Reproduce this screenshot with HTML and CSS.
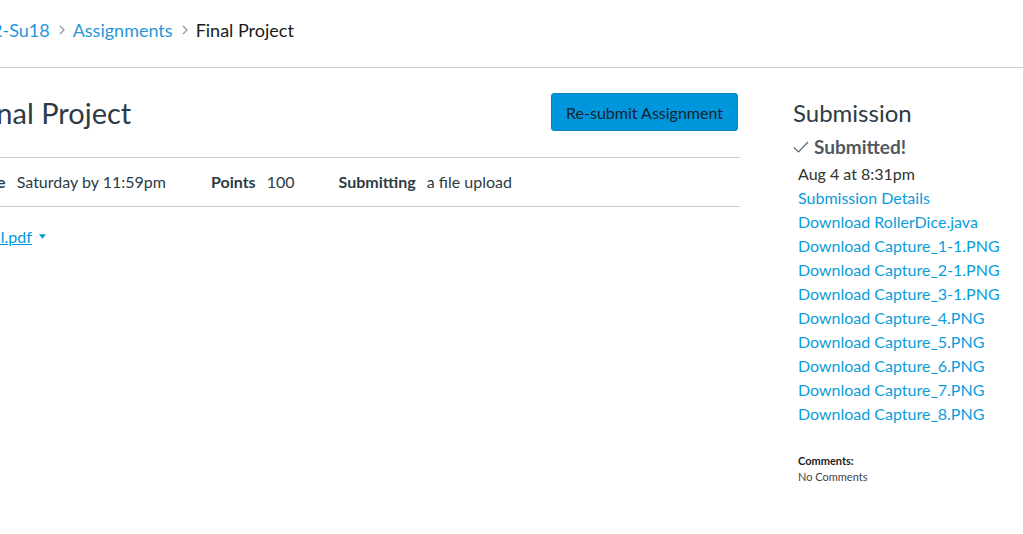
FILE: index.html
```html
<!DOCTYPE html>
<html lang="en">
<head>
<meta charset="utf-8">
<title>Final Project</title>
<link rel="stylesheet" href="styles.css">
</head>
<body>
<header class="topbar">
  <nav class="crumbs">
    <a class="crumb crumb-first" href="#">2-Su18</a>
    <svg class="chev" viewBox="0 0 6 10" width="6" height="10"><path d="M1 1l4 4-4 4" fill="none" stroke="#8b969e" stroke-width="1.2"/></svg>
    <a class="crumb" href="#">Assignments</a>
    <svg class="chev" viewBox="0 0 6 10" width="6" height="10"><path d="M1 1l4 4-4 4" fill="none" stroke="#8b969e" stroke-width="1.2"/></svg>
    <span class="crumb current">Final Project</span>
  </nav>
</header>
<div class="layout">
  <main class="main">
    <div class="title-row">
      <h1 class="title">Final Project</h1>
      <button class="btn">Re-submit Assignment</button>
    </div>
    <ul class="details">
      <li><b>Due</b> Saturday by 11:59pm</li>
      <li><b>Points</b> 100</li>
      <li><b>Submitting</b> a file upload</li>
    </ul>
    <div class="file">
      <a href="#" class="file-link">Final.pdf</a>
      <svg class="caret" viewBox="0 0 8 5" width="7" height="5"><path d="M0 0h8L4 5z" fill="#0096db"/></svg>
    </div>
  </main>
  <aside class="sidebar">
    <h2 class="side-title">Submission</h2>
    <div class="submitted">
      <svg class="check" viewBox="0 0 16 12" width="16" height="12"><path d="M1 6.5l4.5 4.5L15 1" fill="none" stroke="#5a6670" stroke-width="1.2"/></svg>
      <span>Submitted!</span>
    </div>
    <ul class="sub-list">
      <li class="date">Aug 4 at 8:31pm</li>
      <li><a href="#">Submission Details</a></li>
      <li><a href="#">Download RollerDice.java</a></li>
      <li><a href="#">Download Capture_1-1.PNG</a></li>
      <li><a href="#">Download Capture_2-1.PNG</a></li>
      <li><a href="#">Download Capture_3-1.PNG</a></li>
      <li><a href="#">Download Capture_4.PNG</a></li>
      <li><a href="#">Download Capture_5.PNG</a></li>
      <li><a href="#">Download Capture_6.PNG</a></li>
      <li><a href="#">Download Capture_7.PNG</a></li>
      <li><a href="#">Download Capture_8.PNG</a></li>
    </ul>
    <div class="comments">
      <div class="comments-label">Comments:</div>
      <div class="comments-text">No Comments</div>
    </div>
  </aside>
</div>
</body>
</html>
```
FILE: styles.css
```css
html, body {
  margin: 0;
  padding: 0;
  background: #fff;
}
body {
  font-family: Lato, "Open Sans", sans-serif;
  color: #2d3b45;
  overflow: hidden;
}
a { text-decoration: none; }

.topbar {
  height: 68px;
  border-bottom: 1px solid #c7cdd1;
  box-sizing: border-box;
  display: flex;
  align-items: center;
}
.crumbs {
  display: flex;
  align-items: center;
  font-size: 18px;
  margin-top: -7px;
}
.crumb { color: #2a95d6; }
.crumb-first { margin-left: -8px; }
.crumb.current { color: #1a1a1a; }
.chev { margin: 0 8px 0 9px; }

.layout {
  display: flex;
  margin-left: -24px;
}
.main {
  width: 764px;
  flex: none;
}
.title-row {
  display: flex;
  justify-content: space-between;
  align-items: center;
  margin-top: 25px;
  height: 38px;
  padding-right: 2px;
}
.title {
  margin: 0 0 0 -3px;
  font-size: 29px;
  font-weight: 400;
  color: #2d3b45;
}
.btn {
  font-family: inherit;
  font-size: 16px;
  color: #17232e;
  background: #0096db;
  border: 1px solid #0084c2;
  border-radius: 3px;
  height: 38px;
  padding: 0 14px;
}
.details {
  list-style: none;
  margin: 26px 0 0;
  padding: 12px 0;
  border-top: 1px solid #c7cdd1;
  border-bottom: 1px solid #c7cdd1;
  display: flex;
  font-size: 16px;
  line-height: 24px;
}
.details li { margin-right: 44px; }
.details li:first-child { margin-right: 45px; }
.details b { font-weight: 700; margin-right: 7px; }
.file {
  margin-top: 20px;
  display: flex;
  align-items: center;
  font-size: 16px;
  margin-left: -5px;
}
.file-link {
  color: #0096db;
  text-decoration: underline;
}
.caret { margin-left: 7px; }

.sidebar {
  margin-left: 53px;
  width: 240px;
  flex: none;
}
.side-title {
  margin: 27px 0 0;
  font-size: 24px;
  font-weight: 400;
  color: #2d3b45;
  line-height: 36px;
}
.submitted {
  display: flex;
  align-items: center;
  font-size: 19px;
  font-weight: 700;
  color: #4f5a61;
  margin-top: 2px;
  line-height: 28px;
}
.check { margin-right: 5px; }
.sub-list {
  list-style: none;
  margin: 1px 0 0;
  padding: 0 0 0 5px;
  font-size: 16px;
  line-height: 24px;
}
.sub-list .date { color: #333; }
.sub-list a { color: #0a9ddb; }
.comments {
  margin-top: 27px;
  padding-left: 5px;
  font-size: 11px;
  line-height: 16px;
}
.comments-label { font-weight: 700; color: #222; }
.comments-text { color: #444; }
```
